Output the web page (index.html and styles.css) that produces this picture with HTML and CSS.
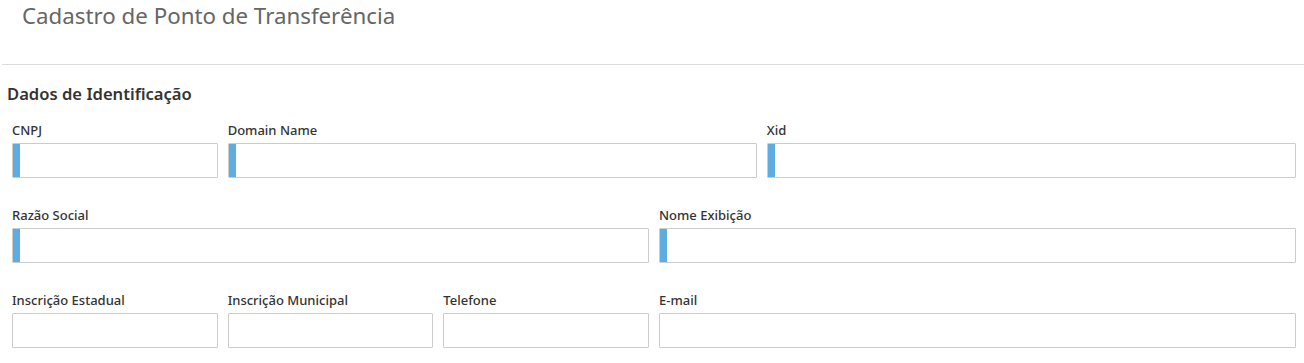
FILE: index.html
```html
<!DOCTYPE html>
<html lang="pt-BR">
<head>
    <meta charset="UTF-8">
    <meta name="viewport" content="width=device-width, initial-scale=1.0">
    <title>Cadastro de Ponto de Transferência</title>
    <link rel="stylesheet" href="styles.css">
</head>
<body>

<!-- Cabeçalho -->
<div class="page-header">
    <h1 class="page-title">Cadastro de Ponto de Transferência</h1>
</div>

<!-- Formulário -->
<div class="form-section">
    <h2 class="section-title">Dados de Identificação</h2>
    <form class="form-grid">
        <div class="form-group span-2">
            <label for="cnpj">CNPJ</label>
            <input type="text" id="cnpj" class="form-input required">
        </div>
        <div class="form-group span-5">
            <label for="domain">Domain Name</label>
            <input type="text" id="domain" class="form-input required">
        </div>
        <div class="form-group span-5">
            <label for="xid">Xid</label>
            <input type="text" id="xid" class="form-input required">
        </div>

        <div class="form-group span-6">
            <label for="razao">Razão Social</label>
            <input type="text" id="razao" class="form-input required">
        </div>
        <div class="form-group span-6">
            <label for="nome">Nome Exibição</label>
            <input type="text" id="nome" class="form-input required">
        </div>

        <div class="form-group span-2">
            <label for="ie">Inscrição Estadual</label>
            <input type="text" id="ie" class="form-input">
        </div>
        <div class="form-group span-2">
            <label for="im">Inscrição Municipal</label>
            <input type="text" id="im" class="form-input">
        </div>
        <div class="form-group span-2">
            <label for="telefone">Telefone</label>
            <input type="text" id="telefone" class="form-input">
        </div>
        <div class="form-group span-6">
            <label for="email">E-mail</label>
            <input type="email" id="email" class="form-input">
        </div>
    </form>
</div>

</body>
</html>
```

FILE: styles.css
```css
body {
    font-family: "Noto Sans", "Open Sans", sans-serif;
    background-color: #fff;
    color: #333;
    margin: 0;
    padding: 0;
}

/* Cabeçalho */
.page-header {
    margin-left: 2px;
    height: 64px;
    border-bottom: 1px solid #ddd;
}
.page-title {
    margin: 0;
    padding: 2px 0 0 20px;
    font-size: 22.3px;
    font-weight: 400;
    line-height: 28px;
    color: #666;
}

/* Formulário */
.form-section {
    padding: 17px 8px 0 12px;
}
.section-title {
    margin: 0 0 15px -5px;
    font-size: 16.6px;
    font-weight: 600;
    line-height: 24px;
    color: #333;
}
.form-grid {
    display: grid;
    grid-template-columns: repeat(12, 1fr);
    column-gap: 10px;
    row-gap: 28px;
}
.form-group {
    display: flex;
    flex-direction: column;
    gap: 4px;
}
.span-2 { grid-column: span 2; }
.span-5 { grid-column: span 5; }
.span-6 { grid-column: span 6; }

.form-group label {
    font-size: 13px;
    font-weight: 500;
    line-height: 18px;
    color: #333;
}
.form-input {
    box-sizing: border-box;
    height: 35px;
    width: 100%;
    padding: 6px 12px;
    border: 1px solid #ccc;
    border-radius: 1px;
    background-color: #fff;
    font-family: inherit;
    font-size: 13px;
}
.form-input.required {
    box-shadow: inset 7px 0 0 #5dade2;
    padding-left: 16px;
}
```
